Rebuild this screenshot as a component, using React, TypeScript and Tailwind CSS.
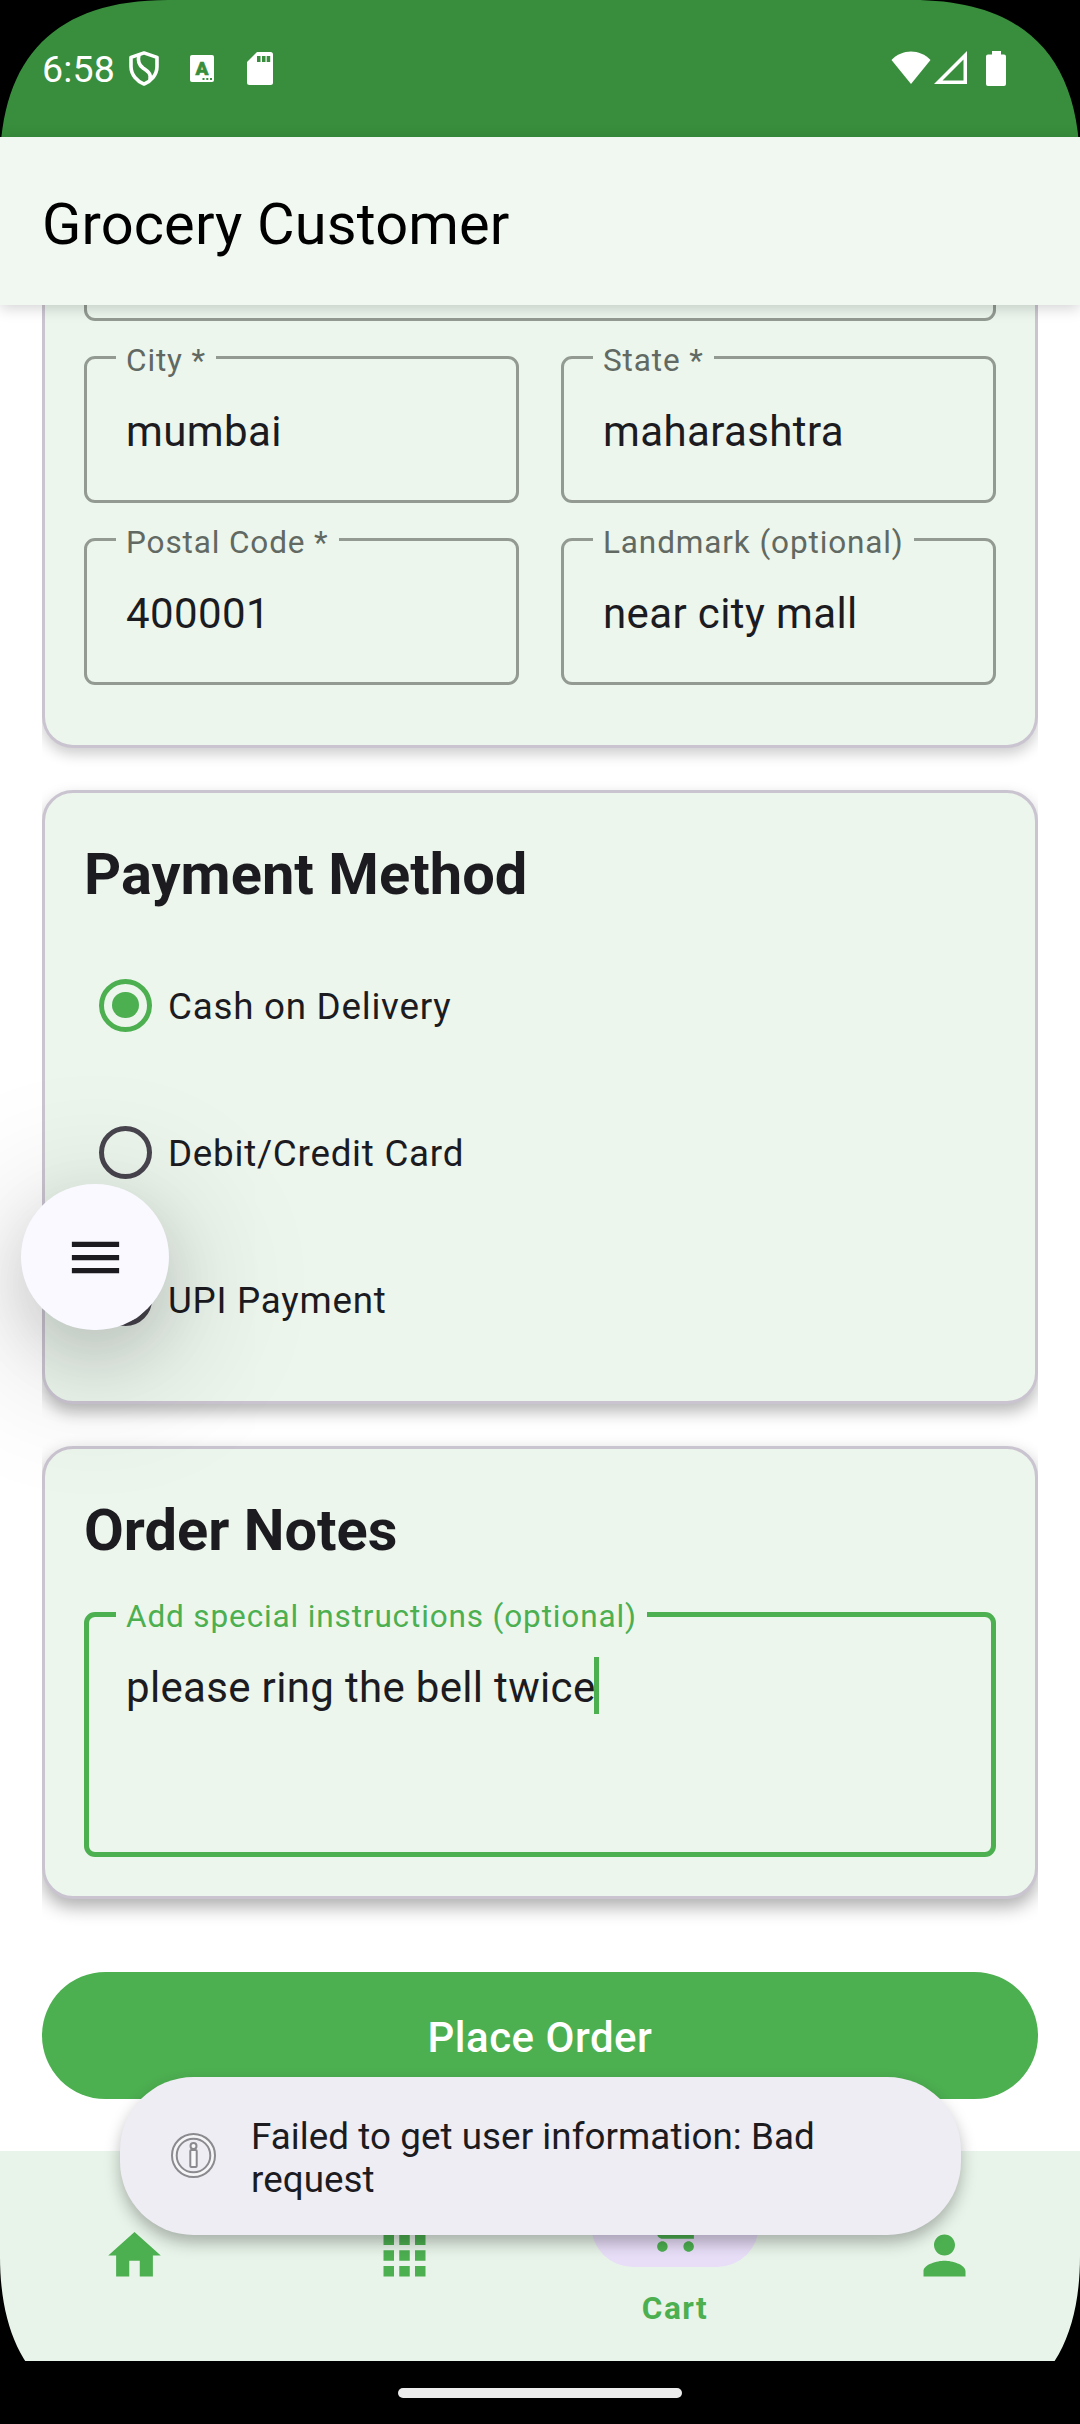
import type { ReactNode } from "react";

const NAV_ICONS = {
  home: "M10 20v-6h4v6h5v-8h3L12 3 2 12h3v8z",
  apps: "M4 8h4V4H4v4zm6 12h4v-4h-4v4zm-6 0h4v-4H4v4zm0-6h4v-4H4v4zm6 0h4v-4h-4v4zm6-10v4h4V4h-4zm-6 4h4V4h-4v4zm6 6h4v-4h-4v4zm0 6h4v-4h-4v4z",
  cart: "M7 18c-1.1 0-1.99.9-1.99 2S5.9 22 7 22s2-.9 2-2-.9-2-2-2zM1 2v2h2l3.6 7.59-1.35 2.45c-.16.28-.25.61-.25.96 0 1.1.9 2 2 2h12v-2H7.42c-.14 0-.25-.11-.25-.25l.03-.12.9-1.63h7.45c.75 0 1.41-.41 1.75-1.03l3.58-6.49c.08-.14.12-.31.12-.48 0-.55-.45-1-1-1H5.21l-.94-2H1zm16 16c-1.1 0-1.99.9-1.99 2s.89 2 1.99 2 2-.9 2-2-.9-2-2-2z",
  person: "M12 12c2.21 0 4-1.79 4-4s-1.79-4-4-4-4 1.79-4 4 1.79 4 4 4zm0 2c-2.67 0-8 1.34-8 4v2h16v-2c0-2.66-5.33-4-8-4z",
};

function StatusBar() {
  return (
    <header className="flex h-[137px] shrink-0 justify-between bg-[#388e3c] pt-[43px] pr-[74px] pl-[42px] text-white">
      <div className="flex h-[51px] items-center">
        <span className="w-[86px] text-[37.5px] leading-[50px] tracking-[0.2px]">6:58</span>
        <svg className="h-[37px] w-[32px]" viewBox="0 0 32 38" preserveAspectRatio="none" fill="none" stroke="white" strokeWidth="3.6" strokeLinejoin="round">
          <path d="M16 3 L29 7.5 V17 C29 25.5 23 32 16 35 C9 32 3 25.5 3 17 V7.5 Z" />
          <path d="M11 5 C9.5 11 11 15.5 15 18.5 C20 22 23.5 24 22 31" />
        </svg>
        <svg className="ml-[30px] h-[27px] w-[24px]" viewBox="0 0 24 27">
          <rect width="24" height="27" rx="2" fill="white" />
          <text x="12" y="20.2" textAnchor="middle" fontSize="19" fontWeight="900" fontFamily="Roboto, sans-serif" fill="#388e3c" stroke="#388e3c" strokeWidth=".6">A</text>
          <path d="M12.5 23h2v2h-2zM16.3 23h2v2h-2zM20 23h2v2h-2z" fill="#388e3c" />
        </svg>
        <svg className="ml-[33px] h-[33px] w-[26px]" viewBox="0 0 26 33">
          <path d="M10 0H23.5Q26 0 26 2.5V30.5Q26 33 23.5 33H2.5Q0 33 0 30.5V10Z" fill="white" />
          <path d="M10 4h3.5v6H10zM15 4h3.5v6H15zM19.7 4h3.5v6H19.7z" fill="#388e3c" />
        </svg>
      </div>
      <div className="flex h-[50px] items-center">
        <svg className="h-[34px] w-[40px]" viewBox="0 0 40 34" fill="white">
          <path d="M20 33 L.5 9 C11 -2.5 29 -2.5 39.5 9 Z" />
        </svg>
        <svg className="ml-[3px] h-[34px] w-[34px]" viewBox="0 0 34 34" fill="white" fillRule="evenodd">
          <path d="M0 33 L33 0 V33 Z M8.5 29.500 H29.500 V8.500 Z" />
        </svg>
        <svg className="ml-[18px] h-[35px] w-[20px]" viewBox="0 0 20 35">
          <path d="M6 0h9v3.5h3q2 0 2 2V33q0 2-2 2H2q-2 0-2-2V5.500q0-2 2-2h4z" fill="white" />
        </svg>
      </div>
    </header>
  );
}

function Card({ className, children }: { className: string; children: ReactNode }) {
  return (
    <section className={`mx-[42px] shrink-0 border-[3px] border-[#cac4d0] bg-[#ecf6ed] px-[39px] [clip-path:inset(-40px_0)] ${className}`}>
      {children}
    </section>
  );
}

function Field({ label, value }: { label: string; value: string }) {
  return (
    <div className="relative h-[147px] rounded-[11px] border-[3px] border-[#929a92] pt-[44.5px] pl-[39px]">
      <span className="absolute top-[-18px] left-[29px] bg-[#ecf6ed] px-[10px] text-[31.5px] leading-[40px] tracking-[0.88px] whitespace-nowrap text-[#616962]">
        {label}
      </span>
      <p className="text-[42px] leading-[56px] tracking-[0.38px]">{value}</p>
    </div>
  );
}

function RadioRow({ label, checked = false }: { label: string; checked?: boolean }) {
  return (
    <div className="flex h-[147px] items-center pl-[15px]">
      <span
        className={
          checked
            ? "flex size-[53px] items-center justify-center rounded-full border-[5.25px] border-[#4caf50]"
            : "size-[53px] rounded-full border-[5.25px] border-[#49454f]"
        }
      >
        {checked && <span className="size-[26.5px] rounded-full bg-[#4caf50]" />}
      </span>
      <span className="mt-[4px] ml-[16px] text-[36.75px] tracking-[0.75px]">{label}</span>
    </div>
  );
}

function NavItem({ icon }: { icon: string }) {
  return (
    <div className="flex flex-1 justify-center pt-[73px]">
      <svg className="-ml-px size-[63px] fill-[#4caf50]" viewBox="0 0 24 24">
        <path d={icon} />
      </svg>
    </div>
  );
}

function Corner({ className }: { className: string }) {
  return (
    <svg className={`absolute size-[168px] ${className}`} viewBox="0 0 168 168">
      <path d="M0 168 C0 56 56 0 168 0 H0 Z" />
    </svg>
  );
}

export default function App() {
  return (
    <div className="relative flex h-[2424px] w-[1080px] flex-col overflow-hidden bg-white font-[Roboto,sans-serif] text-[#1c1b1f]">
      <StatusBar />
      <div className="relative z-10 h-[168px] shrink-0 bg-[#f1f8f1] pt-[53px] pl-[42px] shadow-[0_3px_14px_rgba(0,0,0,0.18)]">
        <h1 className="text-[57.75px] leading-[68px] tracking-[0.15px] text-black">Grocery Customer</h1>
      </div>

      <main className="flex h-[1846px] shrink-0 flex-col overflow-hidden">
        <Card className="h-[443px] rounded-b-[31px] border-t-0 shadow-[0_6px_14px_rgba(0,0,0,0.2)]">
          <div className="h-[16px] rounded-b-[11px] border-[3px] border-t-0 border-[#929a92]" />
          <div className="mt-[35px] grid grid-cols-2 gap-x-[42px] gap-y-[35px]">
            <Field label="City *" value="mumbai" />
            <Field label="State *" value="maharashtra" />
            <Field label="Postal Code *" value="400001" />
            <Field label="Landmark (optional)" value="near city mall" />
          </div>
        </Card>

        <Card className="mt-[42px] h-[614px] rounded-[31px] pt-[47px] shadow-[0_8px_16px_rgba(0,0,0,0.28)]">
          <h2 className="text-[57.75px] leading-[68px] font-bold tracking-[0.05px]">Payment Method</h2>
          <div className="mt-[23.5px]">
            <RadioRow label="Cash on Delivery" checked />
            <RadioRow label="Debit/Credit Card" />
            <RadioRow label="UPI Payment" />
          </div>
        </Card>

        <Card className="mt-[42px] h-[453px] rounded-[31px] pt-[47px] shadow-[0_8px_18px_rgba(0,0,0,0.32)]">
          <h2 className="text-[57.75px] leading-[68px] font-bold">Order Notes</h2>
          <div className="relative mt-[48px] h-[245px] rounded-[11px] border-[5px] border-[#4caf50] pt-[43px] pl-[37px]">
            <span className="absolute top-[-20px] left-[27px] bg-[#ecf6ed] px-[10px] text-[31.5px] leading-[40px] tracking-[0.87px] whitespace-nowrap text-[#4caf50]">
              Add special instructions (optional)
            </span>
            <div className="flex">
              <p className="text-[42px] leading-[56px] tracking-[0.33px]">please ring the bell twice</p>
              <span className="-mt-[3px] -ml-[2px] h-[57px] w-[5px] bg-[#4caf50]" />
            </div>
          </div>
        </Card>

        <button className="mx-[42px] mt-[73px] h-[127px] shrink-0 rounded-full bg-[#4caf50] pt-[3px] text-[42px] font-medium tracking-[0.5px] text-white">
          Place Order
        </button>
      </main>

      <nav className="flex h-[210px] shrink-0 bg-[#e8f4e9]">
        <NavItem icon={NAV_ICONS.home} />
        <NavItem icon={NAV_ICONS.apps} />
        <div className="flex flex-1 flex-col items-center pt-[32px] text-[#4caf50]">
          <div className="flex h-[84px] w-[168px] items-center justify-center rounded-full bg-[#e8def8]">
            <svg className="size-[63px] fill-[#4caf50]" viewBox="0 0 24 24">
              <path d={NAV_ICONS.cart} />
            </svg>
          </div>
          <span className="mt-[21px] text-[31.5px] leading-[42px] font-bold tracking-[1.5px]">Cart</span>
        </div>
        <NavItem icon={NAV_ICONS.person} />
      </nav>

      <footer className="flex h-[63px] shrink-0 justify-center bg-black pt-[27px]">
        <div className="h-[10px] w-[284px] rounded-full bg-[#ececec]" />
      </footer>

      {/* Floating menu button */}
      <button className="absolute top-[1184px] left-[21px] flex h-[146px] w-[148px] items-center justify-center rounded-full bg-[#f9f9ff] shadow-[0_24px_60px_rgba(0,0,0,0.12),0_28px_140px_20px_rgba(0,0,0,0.15)]">
        <svg className="size-[63px] fill-[#1c1b1f]" viewBox="0 0 24 24">
          <path d="M3 18h18v-2H3v2zm0-5h18v-2H3v2zm0-7v2h18V6H3z" />
        </svg>
      </button>

      {/* Toast */}
      <div className="absolute top-[2077px] left-[120px] flex h-[158px] w-[841px] rounded-[73.5px] bg-[#eeedf3] pt-[38px] pl-[50px] shadow-[0_8px_16px_rgba(0,0,0,0.28)]">
        <svg className="mt-[17px] size-[47px] shrink-0" viewBox="0 0 47 47" fill="none" stroke="#8b8a8e" strokeWidth="2">
          <circle cx="23.5" cy="23.5" r="19.2" stroke="#f6f6f8" strokeWidth="5" />
          <circle cx="23.5" cy="23.5" r="21.5" />
          <circle cx="23.5" cy="23.5" r="16.8" />
          <circle cx="23.5" cy="14" r="3" fill="#f9f9fb" />
          <rect x="20.3" y="18" width="6.4" height="17" rx="1" fill="#f9f9fb" />
        </svg>
        <p className="ml-[34px] w-[600px] text-[36.75px] leading-[43px] tracking-[0.06px]">Failed to get user information: Bad request</p>
      </div>

      <Corner className="top-0 left-0" />
      <Corner className="top-0 right-0 rotate-90" />
      <Corner className="right-0 bottom-0 rotate-180" />
      <Corner className="bottom-0 left-0 -rotate-90" />
    </div>
  );
}
